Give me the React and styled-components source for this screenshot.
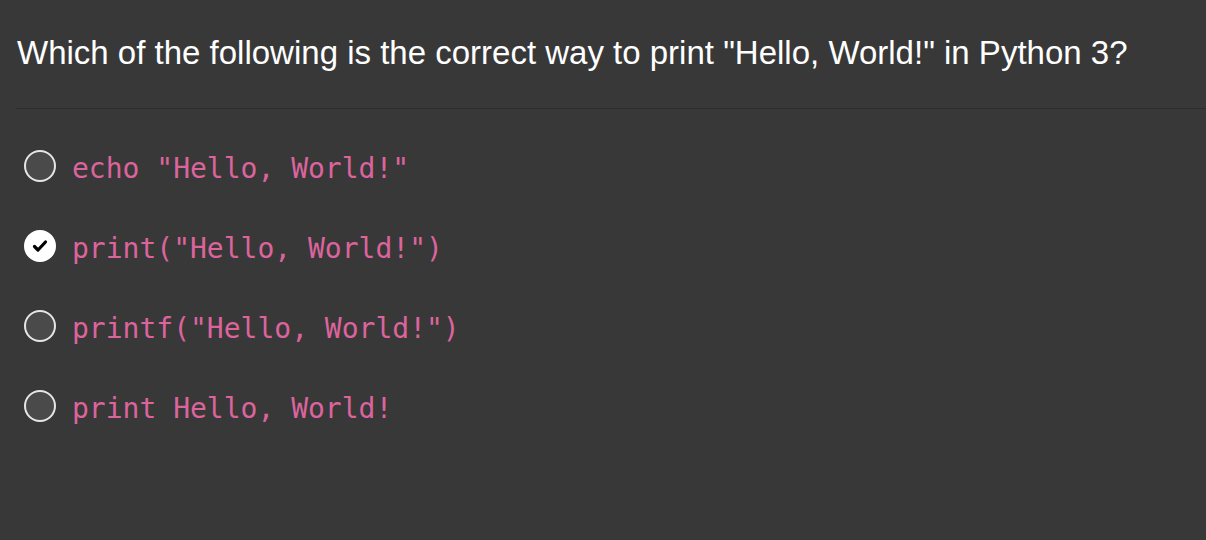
import styled, { createGlobalStyle } from 'styled-components';

const GlobalStyle = createGlobalStyle`
  html, body {
    margin: 0;
    padding: 0;
    background: #383838;
  }
`;

const options = [
  { text: 'echo "Hello, World!"', checked: false },
  { text: 'print("Hello, World!")', checked: true },
  { text: 'printf("Hello, World!")', checked: false },
  { text: 'print Hello, World!', checked: false },
];

const App = () => {
  return (
    <Page>
      <GlobalStyle />
      <Question>
        Which of the following is the correct way to print "Hello, World!" in Python 3?
      </Question>
      <Options>
        {options.map((option, index) => (
          <Row key={index}>
            <Radio checked={option.checked}>
              {option.checked && (
                <svg width='20' height='20' viewBox='0 0 20 20'>
                  <path
                    d='M4.5 10.5 L8 14 L15.5 6'
                    fill='none'
                    stroke='#000'
                    strokeWidth='3.2'
                    strokeLinecap='round'
                    strokeLinejoin='round'
                  />
                </svg>
              )}
            </Radio>
            <Code>{option.text}</Code>
          </Row>
        ))}
      </Options>
    </Page>
  );
};

const Page = styled.div`
  background: #383838;
  min-height: 540px;
  padding-left: 16px;
  font-family: 'Liberation Sans', Arial, sans-serif;
`;

const Question = styled.h1`
  margin: 0;
  padding: 30px 0 33px 1px;
  font-size: 33px;
  font-weight: 400;
  line-height: 45px;
  color: #ffffff;
  border-bottom: 1px solid #2d2d2d;
`;

const Options = styled.div`
  display: flex;
  flex-direction: column;
  padding: 17px 0 0 8px;
`;

const Row = styled.div`
  display: flex;
  align-items: center;
  gap: 16px;
  height: 80px;
`;

const Radio = styled.span`
  box-sizing: border-box;
  width: 32px;
  height: 32px;
  border-radius: 50%;
  border: 2px solid ${(props) => (props.checked ? '#ffffff' : '#e6e6e6')};
  background: ${(props) => (props.checked ? '#ffffff' : '#4a4a4a')};
  display: flex;
  align-items: center;
  justify-content: center;
  flex-shrink: 0;
`;

const Code = styled.span`
  margin-top: 4px;
  font-family: 'DejaVu Sans Mono', 'Liberation Mono', monospace;
  font-size: 28px;
  color: #dc649d;
`;

export default App;
